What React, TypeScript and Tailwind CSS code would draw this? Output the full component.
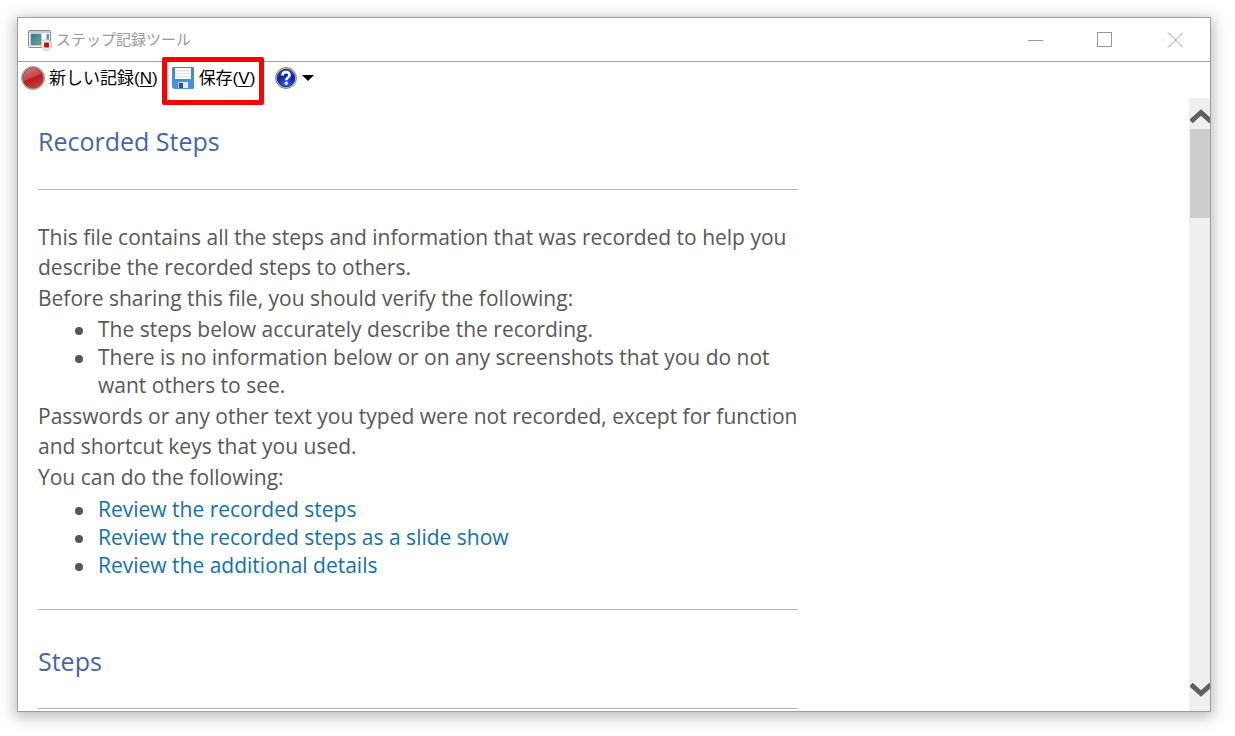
import React from "react";

function AppIcon() {
  return (
    <svg width="24" height="22" viewBox="0 0 24 22" aria-hidden="true">
      <defs>
        <linearGradient id="pane" x1="0" y1="0" x2="1" y2="1">
          <stop offset="0" stopColor="#3a6f9c" />
          <stop offset="1" stopColor="#62b080" />
        </linearGradient>
      </defs>
      <rect x="0.5" y="1.5" width="22" height="17" rx="1" fill="#eef1f3" stroke="#858b90" />
      <rect x="1" y="2" width="21" height="2" fill="#c3ccd3" />
      <rect x="3" y="5" width="10" height="11" fill="url(#pane)" stroke="#5d7f88" strokeWidth="0.6" />
      <rect x="14" y="5" width="4" height="11" fill="#fff" />
      <rect x="18.500" y="5" width="2.500" height="6" fill="#6b93ab" />
      <circle cx="18.500" cy="16" r="5.400" fill="#f1f1f1" stroke="#b5b5b5" strokeWidth="0.8" />
      <rect x="16" y="13.500" width="5" height="5" rx="1" fill="#d30808" />
    </svg>
  );
}

function RecordIcon() {
  return (
    <svg width="24" height="24" viewBox="0 0 24 24" aria-hidden="true">
      <defs>
        <linearGradient id="rec" x1="0.2" y1="0" x2="0.6" y2="1">
          <stop offset="0" stopColor="#d77a78" />
          <stop offset="0.490" stopColor="#c84444" />
          <stop offset="0.530" stopColor="#b81c1e" />
          <stop offset="1" stopColor="#c93a3a" />
        </linearGradient>
      </defs>
      <circle cx="12" cy="12" r="11.500" fill="#c5c5c5" stroke="#8a8a8a" strokeWidth="0.8" />
      <circle cx="12" cy="12" r="10.200" fill="url(#rec)" stroke="#8d3b3b" strokeWidth="0.8" />
    </svg>
  );
}

function SaveIcon() {
  return (
    <svg width="22" height="22" viewBox="0 0 22 22" aria-hidden="true">
      <defs>
        <linearGradient id="disk" x1="0" y1="0" x2="0" y2="1">
          <stop offset="0" stopColor="#4a86c6" />
          <stop offset="1" stopColor="#3f94f0" />
        </linearGradient>
        <linearGradient id="metal" x1="0" y1="0" x2="1" y2="0">
          <stop offset="0" stopColor="#c9c9c9" />
          <stop offset="1" stopColor="#f5f5f5" />
        </linearGradient>
      </defs>
      <path d="M1 0H21L22 1V21L21 22H2L0 20V1Z" fill="url(#disk)" />
      <rect x="3" y="1" width="16" height="11" fill="#f8f8f8" />
      <path d="M3 3.500H19M3 6.500H19M3 9.500H19" stroke="#e6e6e6" />
      <rect x="6" y="15" width="10" height="6" fill="url(#metal)" />
      <rect x="7" y="16" width="4" height="5" fill="#4d5052" />
    </svg>
  );
}

function HelpIcon() {
  return (
    <svg width="22" height="22" viewBox="0 0 22 22" aria-hidden="true">
      <defs>
        <radialGradient id="help" cx="0.5" cy="0.9" r="0.9">
          <stop offset="0" stopColor="#3d6cf5" />
          <stop offset="0.600" stopColor="#1020ac" />
          <stop offset="1" stopColor="#3c50bd" />
        </radialGradient>
      </defs>
      <circle cx="11" cy="11" r="10.400" fill="#d6d6d6" stroke="#777" strokeWidth="1" />
      <circle cx="11" cy="11" r="8.800" fill="url(#help)" stroke="#101568" strokeWidth="0.8" />
      <path d="M7.500 8.600C7.500 4 14.500 4 14.500 8.200C14.500 10.600 11.300 10.600 11.300 13.200" fill="none" stroke="#fff" strokeWidth="2.600" />
      <circle cx="11.300" cy="16.200" r="1.600" fill="#fff" />
    </svg>
  );
}

function Bullet({ children }: { children: React.ReactNode }) {
  return (
    <li className="flex gap-[15px] before:mt-3 before:size-2 before:shrink-0 before:rounded-full before:bg-[#555]">
      <div>{children}</div>
    </li>
  );
}

const links = [
  { href: "#steps", label: "Review the recorded steps" },
  { href: "#slideshow", label: "Review the recorded steps as a slide show" },
  { href: "#details", label: "Review the additional details" },
];

export default function App() {
  return (
    <div className="h-screen bg-white pt-[17px] pr-6 pb-6 pl-[17px] font-['Open_Sans','Noto_Sans_CJK_JP',sans-serif]">
      <div className="flex h-full flex-col overflow-hidden border border-[#a0a0a0] bg-white shadow-[0_3px_14px_2px_rgba(0,0,0,0.28)]">
        <header className="flex h-11 shrink-0 items-center border-b border-[#a0a0a0] pl-[10px]">
          <AppIcon />
          <h1 className="ml-1 flex-1 font-['Noto_Sans_CJK_JP',sans-serif] text-[15px] font-normal text-[#999]">ステップ記録ツール</h1>
          <div className="flex h-full text-[#999]">
            <button aria-label="最小化" className="grid w-[70px] place-items-center">
              <svg width="16" height="16" viewBox="0 0 16 16" fill="none" stroke="currentColor"><path d="M1 8.500H16" /></svg>
            </button>
            <button aria-label="最大化" className="grid w-[70px] place-items-center">
              <svg width="16" height="16" viewBox="0 0 16 16" fill="none" stroke="currentColor"><rect x="0.500" y="0.500" width="14" height="14" /></svg>
            </button>
            <button aria-label="閉じる" className="grid w-[70px] place-items-center">
              <svg width="16" height="16" viewBox="0 0 16 16" fill="none" stroke="currentColor"><path d="M1 0.500L16 15.500M16 0.500L1 15.500" /></svg>
            </button>
          </div>
        </header>

        <div className="flex h-9 shrink-0 items-start pl-[3px] font-['Liberation_Sans','Noto_Sans_CJK_JP',sans-serif] text-[17px] text-black">
          <button className="flex h-8 items-center gap-1 whitespace-nowrap">
            <RecordIcon />
            <span className="pt-[2px]">新しい記録(<u className="underline-offset-2">N</u>)</span>
          </button>
          <button className="-mt-[5px] ml-1 flex h-12 items-center gap-[5px] rounded-xs border-5 border-[#ff0000] pr-1 pb-[6px] pl-[5px] whitespace-nowrap">
            <SaveIcon />
            <span className="pt-[2px]">保存(<u className="underline-offset-2">V</u>)</span>
          </button>
          <button aria-label="ヘルプ" className="ml-[11px] flex h-8 items-center gap-[5px]">
            <HelpIcon />
            <svg width="12" height="6" viewBox="0 0 12 6" aria-hidden="true"><path d="M0 0H12L6 6Z" fill="#000" /></svg>
          </button>
        </div>

        <div className="flex min-h-0 flex-1">
          <main className="min-w-0 flex-1 overflow-hidden px-5 text-[21px] leading-[30px] text-[#585858]">
            <div className="max-w-[760px]">
              <h2 className="pt-[27px] pb-8 text-[25px] leading-8 text-[#4465a8]">Recorded Steps</h2>
              <hr className="mb-8 border-[#b1b5c5]" />
              <p>This file contains all the steps and information that was recorded to help you describe the recorded steps to others.</p>
              <p className="mt-px">Before sharing this file, you should verify the following:</p>
              <ul className="my-[2px] pl-[37px] leading-7">
                <Bullet>The steps below accurately describe the recording.</Bullet>
                <Bullet>There is no information below or on any screenshots that you do not want others to see.</Bullet>
              </ul>
              <p>Passwords or any other text you typed were not recorded, except for function and shortcut keys that you used.</p>
              <p className="mt-px">You can do the following:</p>
              <ul className="mt-[3px] pl-[37px] leading-7">
                {links.map((l) => (
                  <Bullet key={l.href}><a href={l.href} className="text-[#1370ab]">{l.label}</a></Bullet>
                ))}
              </ul>
              <hr className="mt-[30px] border-[#b1b5c5]" />
              <h2 id="steps" className="pt-[35px] pb-[31px] text-[25px] leading-8 text-[#4465a8]">Steps</h2>
              <hr className="border-[#b1b5c5]" />
            </div>
          </main>
          <div className="flex w-[21px] shrink-0 flex-col bg-[#efefef] pl-px">
            <button aria-label="上へスクロール" className="flex h-[31px] items-center pt-[6px]">
              <svg width="20" height="16" viewBox="0 0 20 16" aria-hidden="true"><path d="M1 12.500L11 3.500L21 12.500" fill="none" stroke="#606060" strokeWidth="5" /></svg>
            </button>
            <div className="h-[89px] bg-[#cdcdcd]" />
            <button aria-label="下へスクロール" className="mt-auto flex h-11 items-center">
              <svg width="20" height="16" viewBox="0 0 20 16" aria-hidden="true"><path d="M1 3.500L11 12.500L21 3.500" fill="none" stroke="#606060" strokeWidth="5" /></svg>
            </button>
          </div>
        </div>
      </div>
    </div>
  );
}
